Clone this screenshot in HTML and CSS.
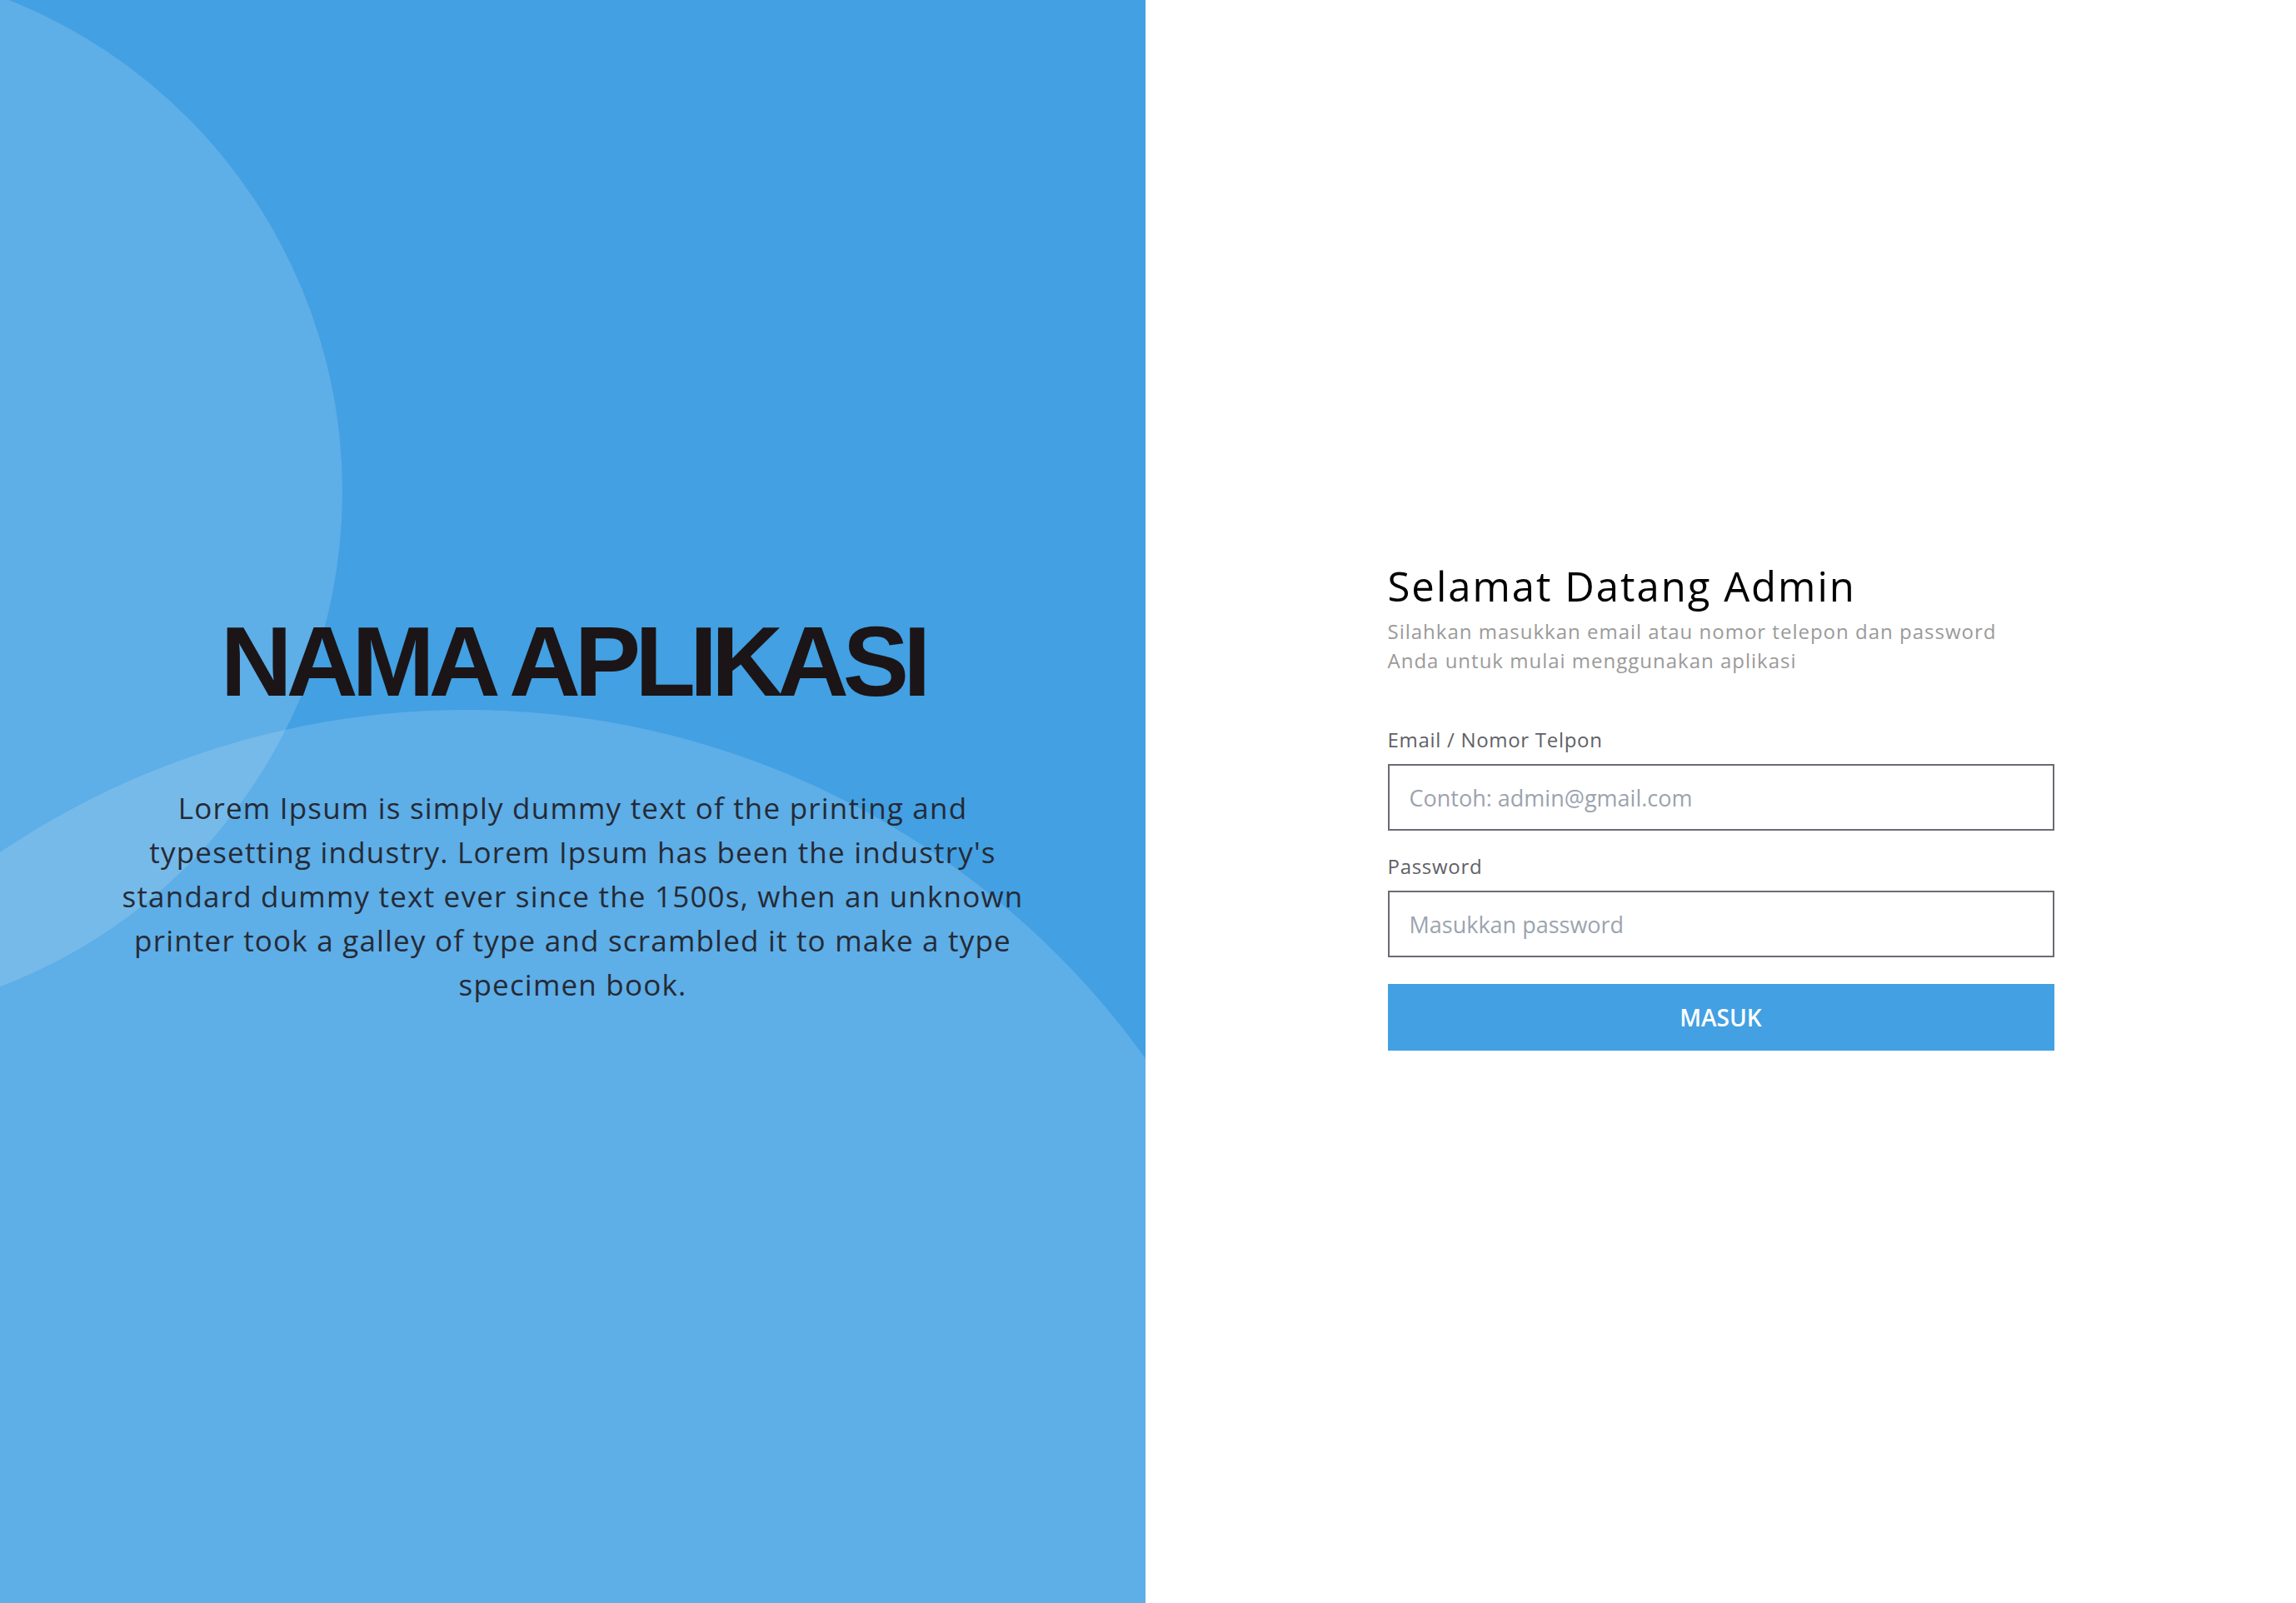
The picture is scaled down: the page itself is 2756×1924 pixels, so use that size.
FILE: index.html
```html
<!DOCTYPE html>
<html lang="id">
<head>
<meta charset="utf-8">
<title>Login Admin</title>
<link rel="stylesheet" href="styles.css">
</head>
<body>
<div class="page">
  <section class="hero">
    <div class="blob blob-top"></div>
    <div class="blob blob-bottom"></div>
    <div class="hero-content">
      <h1 class="hero-title">NAMA APLIKASI</h1>
      <p class="hero-text">Lorem Ipsum is simply dummy text of the printing and<br>typesetting industry. Lorem Ipsum has been the industry's<br>standard dummy text ever since the 1500s, when an unknown<br>printer took a galley of type and scrambled it to make a type<br>specimen book.</p>
    </div>
  </section>
  <main class="login">
    <form class="login-form">
      <h2 class="login-title">Selamat Datang Admin</h2>
      <p class="login-subtitle">Silahkan masukkan email atau nomor telepon dan password<br>Anda untuk mulai menggunakan aplikasi</p>
      <label class="field-label" for="email">Email / Nomor Telpon</label>
      <input class="field-input" id="email" type="text" placeholder="Contoh: admin@gmail.com">
      <label class="field-label field-label--next" for="password">Password</label>
      <input class="field-input" id="password" type="password" placeholder="Masukkan password">
      <button class="btn-submit" type="button">MASUK</button>
    </form>
  </main>
</div>
</body>
</html>
```
FILE: styles.css
```css
* { box-sizing: border-box; }

html, body {
  margin: 0;
  padding: 0;
  background: #ffffff;
}

.page {
  display: flex;
  width: 100%;
  height: 100vh;
  min-height: 1924px;
  font-family: "Open Sans", "Noto Sans", sans-serif;
}

/* ---------- left hero ---------- */
.hero {
  position: relative;
  flex: 0 0 1375px;
  overflow: hidden;
  background: #42a0e3;
}

.blob {
  position: absolute;
  border-radius: 50%;
  background: rgba(255, 255, 255, 0.15);
}

.blob-top {
  left: -859px;
  top: -45px;
  width: 1270px;
  height: 1270px;
}

.blob-bottom {
  left: -443px;
  top: 852px;
  width: 2006px;
  height: 2006px;
}

.hero-content {
  position: relative;
  z-index: 1;
  height: 100%;
  display: flex;
  flex-direction: column;
  align-items: center;
  justify-content: center;
  padding-top: 18px;
  text-align: center;
}

.hero-title {
  margin: 0;
  font-family: "Liberation Sans", Arial, sans-serif;
  font-weight: 700;
  font-size: 119px;
  line-height: 1;
  letter-spacing: -7px;
  color: #1b1517;
}

.hero-text {
  margin: 90px 0 0;
  font-family: "Open Sans", sans-serif;
  font-size: 35px;
  line-height: 53px;
  letter-spacing: 1.2px;
  color: #252a35;
}

/* ---------- right login ---------- */
.login {
  flex: 1 1 auto;
  display: flex;
  align-items: center;
  justify-content: center;
  padding-top: 11px;
}

.login-form {
  width: 800px;
  display: flex;
  flex-direction: column;
}

.login-title {
  margin: 0;
  font-size: 49px;
  line-height: 1.2;
  font-weight: 400;
  letter-spacing: 2px;
  color: #000000;
}

.login-subtitle {
  margin: 8px 0 0;
  font-size: 24px;
  line-height: 35px;
  letter-spacing: 1px;
  color: #9a9a9a;
}

.field-label {
  margin-top: 60px;
  font-size: 24px;
  line-height: 36px;
  letter-spacing: 0.7px;
  color: #5f6166;
}

.field-label--next {
  margin-top: 25px;
}

.field-input {
  margin-top: 11px;
  height: 80px;
  width: 100%;
  padding: 0 24px;
  border: 2px solid #696c72;
  border-radius: 0;
  background: #ffffff;
  font-family: "Open Sans", sans-serif;
  font-size: 27px;
  color: #333;
  outline: none;
}

.field-input::placeholder {
  color: #9ca3af;
}

.btn-submit {
  margin-top: 32px;
  height: 80px;
  width: 100%;
  border: none;
  background: #42a0e3;
  color: #ffffff;
  font-family: "Open Sans", sans-serif;
  font-size: 28px;
  font-weight: 600;
  cursor: pointer;
}
```
